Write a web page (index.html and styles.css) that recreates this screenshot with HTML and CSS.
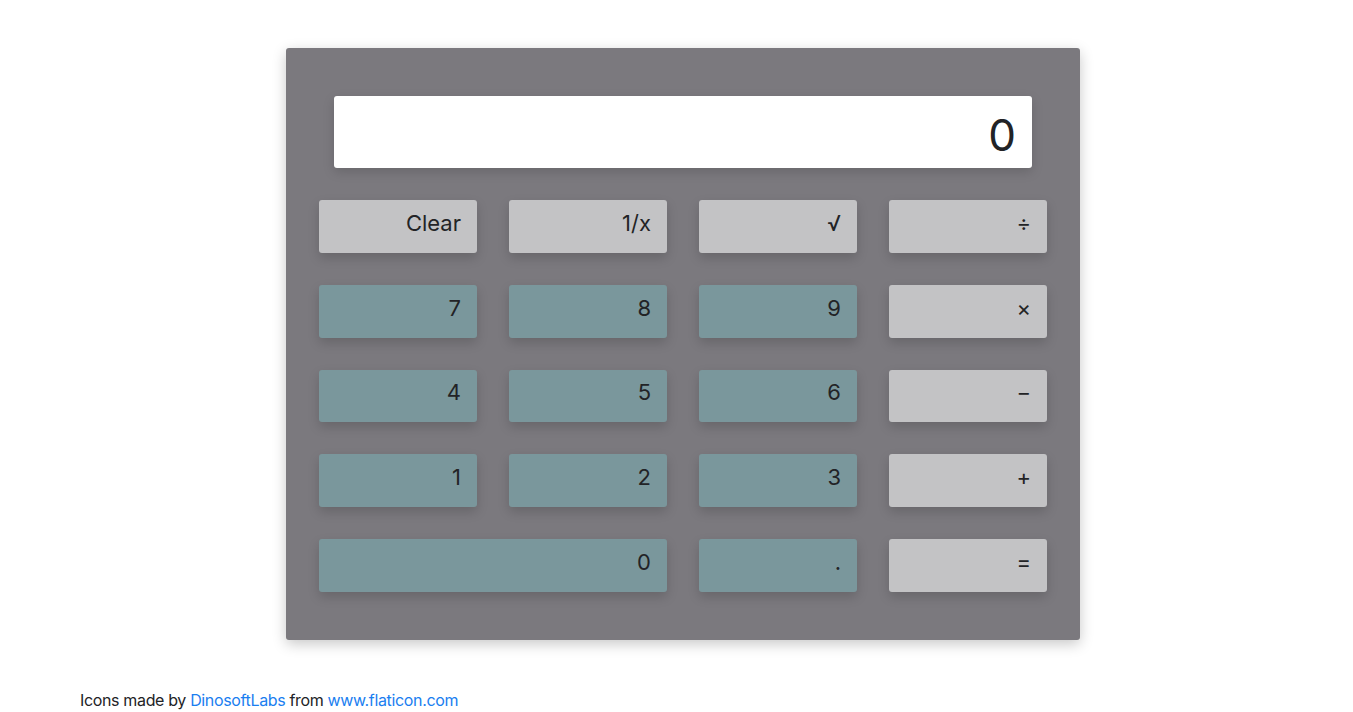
FILE: index.html
```html
<!DOCTYPE html>
<html>
<head>
<meta charset="utf-8">
<link rel="stylesheet" href="styles.css">
</head>
<body>
<main class="page">
  <div class="calc">
    <div class="display">0</div>
    <div class="keys">
      <button class="key op">Clear</button>
      <button class="key op">1/x</button>
      <button class="key op">√</button>
      <button class="key op">÷</button>
      <button class="key num">7</button>
      <button class="key num">8</button>
      <button class="key num">9</button>
      <button class="key op">×</button>
      <button class="key num">4</button>
      <button class="key num">5</button>
      <button class="key num">6</button>
      <button class="key op">−</button>
      <button class="key num">1</button>
      <button class="key num">2</button>
      <button class="key num">3</button>
      <button class="key op">+</button>
      <button class="key num wide">0</button>
      <button class="key num">.</button>
      <button class="key op">=</button>
    </div>
  </div>
</main>
<footer class="credits">Icons made by <a href="#">DinosoftLabs</a> from <a href="#">www.flaticon.com</a></footer>
</body>
</html>
```
FILE: styles.css
```css
html, body {
  margin: 0;
  padding: 0;
  background: #ffffff;
  font-family: Inter, "Noto Sans", "Liberation Sans", sans-serif;
  color: #222326;
}
.page {
  display: flex;
  justify-content: center;
  padding: 48px 0 0 13px;
}
.calc {
  width: 794px;
  box-sizing: border-box;
  background: #7b797e;
  border-radius: 3px;
  box-shadow: 0 4px 14px rgba(0, 0, 0, 0.22);
  padding: 48px 33px;
}
.display {
  margin: 0 15px;
  height: 72px;
  background: #ffffff;
  border-radius: 3px;
  box-shadow: 0 4px 12px rgba(0, 0, 0, 0.15);
  display: flex;
  align-items: center;
  justify-content: flex-end;
  padding: 6px 16px 0 0;
  font-size: 44px;
  line-height: 1;
  color: #222326;
  box-sizing: border-box;
}
.keys {
  margin-top: 32px;
  display: grid;
  grid-template-columns: repeat(4, 158px);
  grid-auto-rows: 52.75px;
  column-gap: 32px;
  row-gap: 32px;
}
.key {
  border: none;
  border-radius: 3px;
  font-family: inherit;
  font-size: 22px;
  color: #222326;
  text-align: right;
  padding: 0 16px 7px 0;
  box-shadow: 0 5px 12px rgba(0, 0, 0, 0.16);
}
.op { background: #c3c3c5; }
.num { background: #7a979c; }
.wide { grid-column: span 2; }
.credits {
  padding: 50px 0 0 80px;
  font-size: 16px;
  letter-spacing: -0.35px;
  color: #222326;
  font-family: Inter, "Noto Sans", "Liberation Sans", sans-serif;
}
.credits a {
  color: #1a7ef0;
  text-decoration: none;
}
```
